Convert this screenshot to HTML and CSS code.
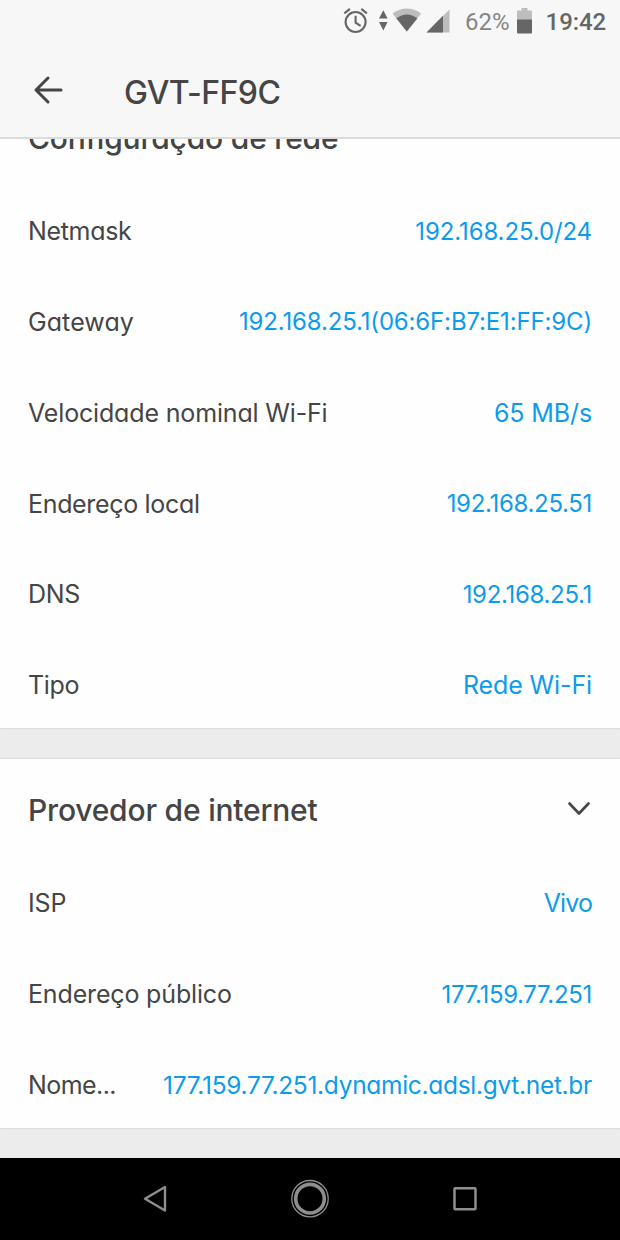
FILE: index.html
```html
<!DOCTYPE html>
<html lang="pt-BR">
<head>
<meta charset="utf-8">
<title>GVT-FF9C</title>
<link rel="stylesheet" href="styles.css">
</head>
<body>
<div class="screen">
  <header class="header">
    <div class="status">
      <svg class="status-icons" width="280" height="42" viewBox="340 0 280 42">
        <g fill="none" stroke="#666" stroke-width="2.1"><circle cx="355.6" cy="22" r="10"/><path d="M355.6 15.8v6.8l5 3.2M344.3 13.4l5.6-4.5M361.3 8.9l5.6 4.5"/></g>
        <path fill="#666" d="M383.3 10.2l4.3 8.4H379zM383.3 30.4l4.3-8.4H379z"/>
        <path fill="#bdbdbd" d="M392.5 13.6Q406.8 3.6 421.2 13.6L406.8 31.6z"/>
        <path fill="#666" d="M396.3 18.3Q406.8 10.6 417.4 18.3L406.8 31.6z"/>
        <path fill="#bdbdbd" d="M449.5 9.5v23h-23z"/>
        <path fill="#666" d="M443 15.8v16.7h-16.5z"/>
        <path fill="#bdbdbd" d="M521.5 8h6v2.5h4.4V20H517V10.5h4.5z"/>
        <path fill="#666" d="M517 19.4h15v13q0 1-1 1h-13q-1 0-1-1z"/>
      </svg>
      <span class="battery">62%</span>
      <span class="clock">19:42</span>
    </div>
    <div class="titlebar">
      <svg class="back" width="30" height="30" viewBox="0 0 30 30"><path d="M15 3L3 15 15 27M3 15H28"/></svg>
      <h1 class="title">GVT-FF9C</h1>
    </div>
  </header>
  <main class="content">
    <section class="card network">
      <h2 class="section">Configuração de rede</h2>
      <div class="row"><span class="label tight">Netmask</span><span class="value digits">192.168.25.0/24</span></div>
      <div class="row"><span class="label loose">Gateway</span><span class="value digits hardware">192.168.25.1(06:6F:B7:E1:FF:9C)</span></div>
      <div class="row"><span class="label">Velocidade nominal Wi-Fi</span><span class="value">65 MB/s</span></div>
      <div class="row"><span class="label tight">Endereço local</span><span class="value digits address">192.168.25.51</span></div>
      <div class="row"><span class="label tight">DNS</span><span class="value digits address">192.168.25.1</span></div>
      <div class="row"><span class="label tight">Tipo</span><span class="value">Rede Wi-Fi</span></div>
    </section>
    <section class="card provider">
      <h2 class="section">Provedor de internet
        <svg class="chevron" width="24" height="16" viewBox="0 0 24 16"><path d="M2.5 2.5L12 12.5 21.500 2.5"/></svg></h2>
      <div class="row"><span class="label">ISP</span><span class="value carrier">Vivo</span></div>
      <div class="row"><span class="label">Endereço público</span><span class="value digits address">177.159.77.251</span></div>
      <div class="row"><span class="label tighter">Nome...</span><span class="value hostname">177.159.77.251.dynamic.adsl.gvt.net.br</span></div>
    </section>
  </main>
  <nav class="nav">
    <svg width="620" height="82" viewBox="0 1158 620 82" fill="none" stroke="#8e8e8e">
      <path stroke-width="2.4" stroke-linejoin="round" d="M165 1187v23.5L145 1198.700z"/>
      <circle cx="310" cy="1198.700" r="18.2" stroke-width="1.3"/><circle cx="310" cy="1198.700" r="14.300" stroke-width="3.6"/>
      <rect x="454.500" y="1188.300" width="21" height="21" rx=".8" stroke-width="2.5"/>
    </svg>
  </nav>
</div>
</body>
</html>
```
FILE: styles.css
```css
* { box-sizing: border-box; }
body { margin: 0; font-family: Inter, "Liberation Sans", sans-serif; font-feature-settings: "cv11", "ss03"; color: #454545; }
.screen { width: 620px; height: 1240px; display: flex; flex-direction: column; background: #ececec; overflow: hidden; }

.header { height: 139px; flex: none; background: #f7f7f7; border-bottom: 2px solid #dcdcdc; }
.status { height: 42px; display: flex; justify-content: flex-end; align-items: center; position: relative; padding: 2px 14px 0 0; font-family: Roboto, sans-serif; font-size: 24px; color: #666; gap: 36px; }
.status-icons { position: absolute; right: 0; top: 0; }
.battery { color: #858585; }
.clock { font-weight: 500; letter-spacing: -0.1px; }
.titlebar { height: 96px; display: flex; align-items: center; padding-left: 33px; }
.back { fill: none; stroke: #454545; stroke-width: 3; stroke-linecap: round; stroke-linejoin: round; }
.title { margin: 5px 0 0 61px; font-size: 32px; font-weight: 500; letter-spacing: -0.55px; }

.content { height: 1019px; flex: none; overflow: hidden; }
.card { background: #fefefe; padding: 0 28px; overflow: hidden; box-shadow: 0 0 2px #bbb; }
.network { height: 589px; display: flex; flex-direction: column; justify-content: flex-end; margin-bottom: 31px; }
.provider { height: 369px; }
.section { margin: 0; height: 96.6px; flex: none; display: flex; align-items: center; justify-content: space-between; padding-top: 6px; font-size: 30px; font-weight: 500; letter-spacing: -0.2px; }
.chevron { margin: -3px 1.5px 0 0; fill: none; stroke: #454545; stroke-width: 2.6; stroke-linecap: round; stroke-linejoin: round; }
.row { height: 90.8px; flex: none; display: flex; align-items: center; justify-content: space-between; padding-top: 5px; font-size: 25px; white-space: nowrap; }
.label { letter-spacing: -0.16px; }
.label.tight { letter-spacing: -0.33px; }
.label.tighter { letter-spacing: -0.56px; }
.label.loose { letter-spacing: 0.08px; }
.value { color: #0d9bec; letter-spacing: -0.12px; }
.digits { font-size: 24px; }
.address { letter-spacing: -0.32px; }
.hardware { letter-spacing: -0.15px; }
.carrier { letter-spacing: -0.9px; }
.hostname { font-size: 24.5px; letter-spacing: -0.3px; }

.nav { height: 82px; background: #000; }
.nav svg { display: block; }
```
